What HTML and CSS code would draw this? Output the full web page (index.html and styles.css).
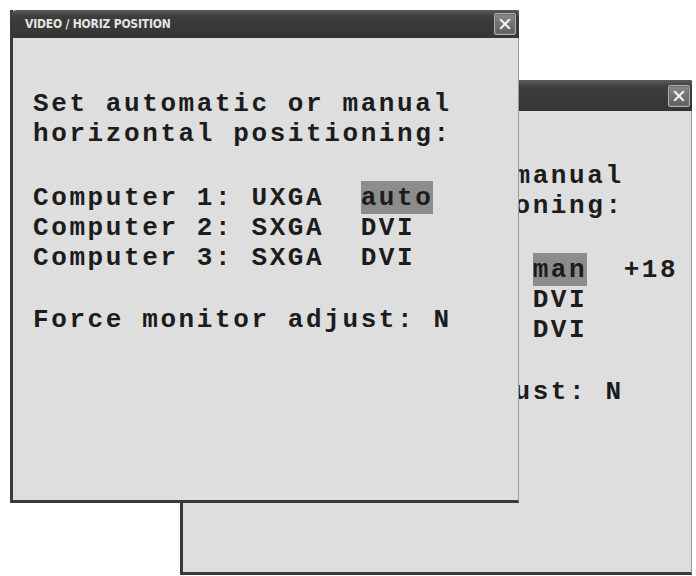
FILE: index.html
```html
<!DOCTYPE html>
<html>
<head>
<meta charset="utf-8">
<link rel="stylesheet" href="styles.css">
</head>
<body>
<div class="desktop">
  <div class="window back">
    <div class="titlebar">
      <span class="title"></span>
      <span class="close"><svg viewBox="0 0 20 20" width="14" height="14"><path d="M4 4L16 16M16 4L4 16" stroke="#f2f2f2" stroke-width="3" stroke-linecap="round"/></svg></span>
    </div>
    <div class="body">
      <div class="block">Set automatic or manual<br>horizontal positioning:</div>
      <div class="block gap1">Computer 1: UXGA  <span class="hl">man</span>  +18<br>Computer 2: SXGA  DVI<br>Computer 3: SXGA  DVI</div>
      <div class="block gap2">Force monitor adjust: N</div>
    </div>
  </div>
  <div class="window front">
    <div class="titlebar">
      <span class="title">VIDEO / HORIZ POSITION</span>
      <span class="close"><svg viewBox="0 0 20 20" width="14" height="14"><path d="M4 4L16 16M16 4L4 16" stroke="#f2f2f2" stroke-width="3" stroke-linecap="round"/></svg></span>
    </div>
    <div class="body">
      <div class="block">Set automatic or manual<br>horizontal positioning:</div>
      <div class="block gap1">Computer 1: UXGA  <span class="hl">auto</span><br>Computer 2: SXGA  DVI<br>Computer 3: SXGA  DVI</div>
      <div class="block gap2">Force monitor adjust: N</div>
    </div>
  </div>
</div>
</body>
</html>
```
FILE: styles.css
```css
html, body {
  margin: 0;
  padding: 0;
  background: #ffffff;
}
.desktop {
  position: relative;
  width: 696px;
  height: 576px;
  overflow: hidden;
}
.window {
  position: absolute;
  display: flex;
  flex-direction: column;
  box-sizing: border-box;
  background: #dedede;
  border-left: 3px solid #3a3a3a;
  border-bottom: 3px solid #3a3a3a;
  border-right: 1px solid #9a9a9a;
}
.front {
  left: 10px;
  top: 10px;
  width: 509px;
  height: 493px;
}
.back {
  left: 180px;
  top: 80px;
  width: 512px;
  height: 495px;
}
.titlebar {
  display: flex;
  align-items: center;
  justify-content: space-between;
  height: 28px;
  margin-left: -3px;
  margin-right: -1px;
  padding: 0 3px 0 15px;
  background: linear-gradient(#5a5a5a 0%, #3c3c3c 25%, #353535 100%);
  border-top-left-radius: 7px;
  border-top-right-radius: 2px;
  flex: none;
}
.back .titlebar {
  height: 31px;
  padding-right: 2px;
}
.title {
  font-family: "DejaVu Sans Condensed", "DejaVu Sans", sans-serif;
  font-weight: bold;
  font-size: 12px;
  letter-spacing: -0.2px;
  color: #e4e4e4;
}
.close {
  display: flex;
  align-items: center;
  justify-content: center;
  width: 20px;
  height: 20px;
  border: 1px solid #b0b0b0;
  border-radius: 2px;
  background: linear-gradient(#8a8a8a, #5e5e5e);
  box-shadow: inset 0 0 0 1px #6e6e6e;
}
.body {
  flex: 1;
  padding: 51px 0 0 20px;
  font-family: "Courier New", "Nimbus Mono PS", "FreeMono", "Liberation Mono", monospace;
  font-weight: bold;
  font-size: 26px;
  letter-spacing: 2.6px;
  line-height: 30px;
  color: #1c1c1c;
}
.block {
  white-space: pre;
}
.back .body {
  padding: 50px 0 0 22px;
}
.gap1 {
  margin-top: 34px;
}
.gap2 {
  margin-top: 32px;
}
.hl {
  background: #8c8c8c;
  padding: 2px 0 1px;
}
```
